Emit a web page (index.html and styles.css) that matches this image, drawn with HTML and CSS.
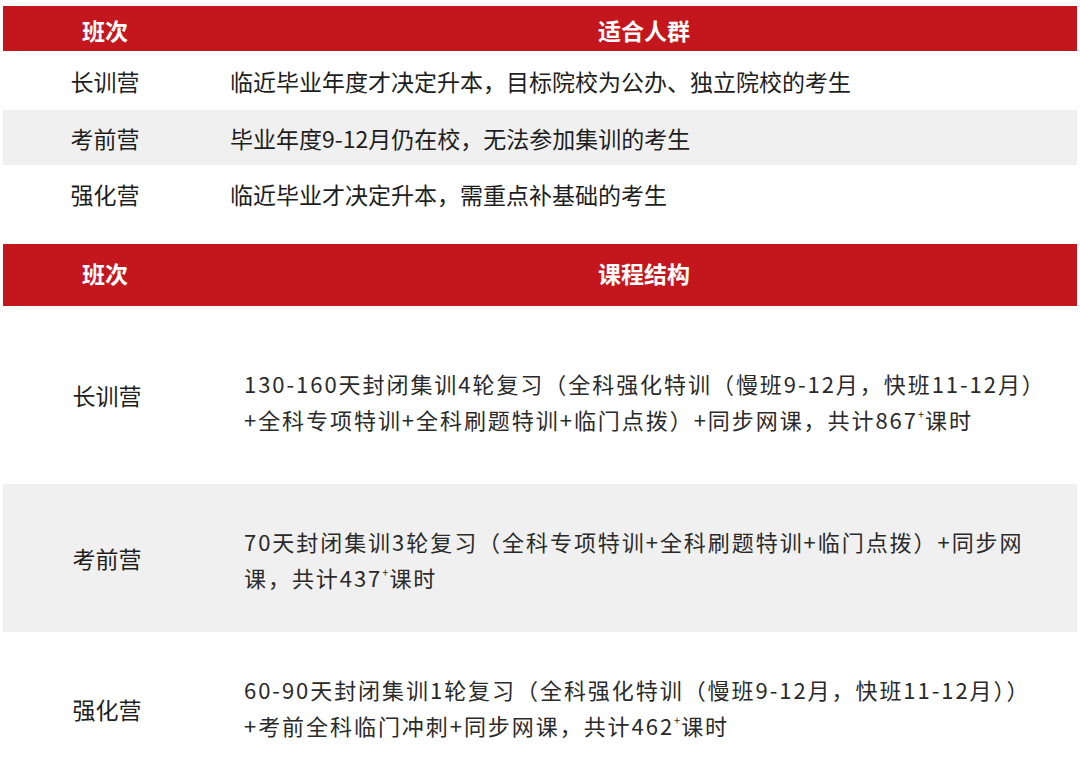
FILE: index.html
```html
<!DOCTYPE html>
<html lang="zh-CN">
<head>
<meta charset="utf-8">
<link rel="stylesheet" href="styles.css">
</head>
<body>
<div class="page">
  <section class="table t1">
    <div class="head">
      <div class="c1">班次</div>
      <div class="c2">适合人群</div>
    </div>
    <div class="row">
      <div class="c1">长训营</div>
      <div class="c2">临近毕业年度才决定升本，目标院校为公办、独立院校的考生</div>
    </div>
    <div class="row alt">
      <div class="c1">考前营</div>
      <div class="c2">毕业年度9-12月仍在校，无法参加集训的考生</div>
    </div>
    <div class="row">
      <div class="c1">强化营</div>
      <div class="c2">临近毕业才决定升本，需重点补基础的考生</div>
    </div>
  </section>

  <section class="table t2">
    <div class="head">
      <div class="c1">班次</div>
      <div class="c2">课程结构</div>
    </div>
    <div class="row r1">
      <div class="c1">长训营</div>
      <div class="c2">130-160天封闭集训4轮复习（全科强化特训（慢班9-12月，快班11-12月）<br>+全科专项特训+全科刷题特训+临门点拨）+同步网课，共计867<sup>+</sup>课时</div>
    </div>
    <div class="row alt r2">
      <div class="c1">考前营</div>
      <div class="c2">70天封闭集训3轮复习（全科专项特训+全科刷题特训+临门点拨）+同步网<br>课，共计437<sup>+</sup>课时</div>
    </div>
    <div class="row r3">
      <div class="c1">强化营</div>
      <div class="c2">60-90天封闭集训1轮复习（全科强化特训（慢班9-12月，快班11-12月））<br>+考前全科临门冲刺+同步网课，共计462<sup>+</sup>课时</div>
    </div>
  </section>
</div>
</body>
</html>
```

FILE: styles.css
```css
* { box-sizing: border-box; }
html, body { margin: 0; padding: 0; background: #fff; }
body {
  font-family: "Noto Sans CJK SC", "Noto Sans", sans-serif;
  color: #1e1e1e;
}
.page {
  padding: 6px 3px 0 3px;
  width: 1080px;
  height: 766px;
  overflow: hidden;
}
.table { width: 1074px; }
.head, .row {
  display: grid;
  grid-template-columns: 204px 1fr;
  align-items: center;
}
.head {
  background: #c4171d;
  color: #fff;
  font-weight: 700;
  font-size: 23px;
}
.head .c1, .head .c2 { text-align: center; }
.head .c2 { padding-left: 4px; }
.row .c1 { text-align: center; }
.alt { background: #f0f0f0; }

.t1 .head { height: 45px; padding-top: 2px; }
.t1 .row { height: 57px; font-size: 23px; }
.t1 .row:nth-of-type(2) { height: 59px; }
.t1 .row:nth-of-type(3) { height: 55px; }
.t1 .row .c2 { padding-left: 23px; white-space: nowrap; }

.t2 { margin-top: 22px; }
.t2 .head { height: 62px; padding-bottom: 4px; }
.t2 .row { font-size: 22px; color: #2a2a2a; }
.t2 .row .c1 { font-size: 23px; color: #1e1e1e; padding-left: 4px; }
.t2 .row .c2 {
  padding-left: 37px;
  line-height: 36px;
  letter-spacing: 1.95px;
  white-space: nowrap;
}
.t2 .r1 { height: 178px; }
.t2 .r1 .c2 { padding-top: 16px; }
.t2 .r2 { height: 148px; }
.t2 .r2 .c2 { padding-top: 6px; }
.t2 .r3 { height: 154px; }
.t2 .r3 .c2 { padding-top: 0; }
sup {
  font-size: 11px;
  vertical-align: 0;
  position: relative;
  top: -10px;
  letter-spacing: 0;
  margin-right: 1px;
}
```
